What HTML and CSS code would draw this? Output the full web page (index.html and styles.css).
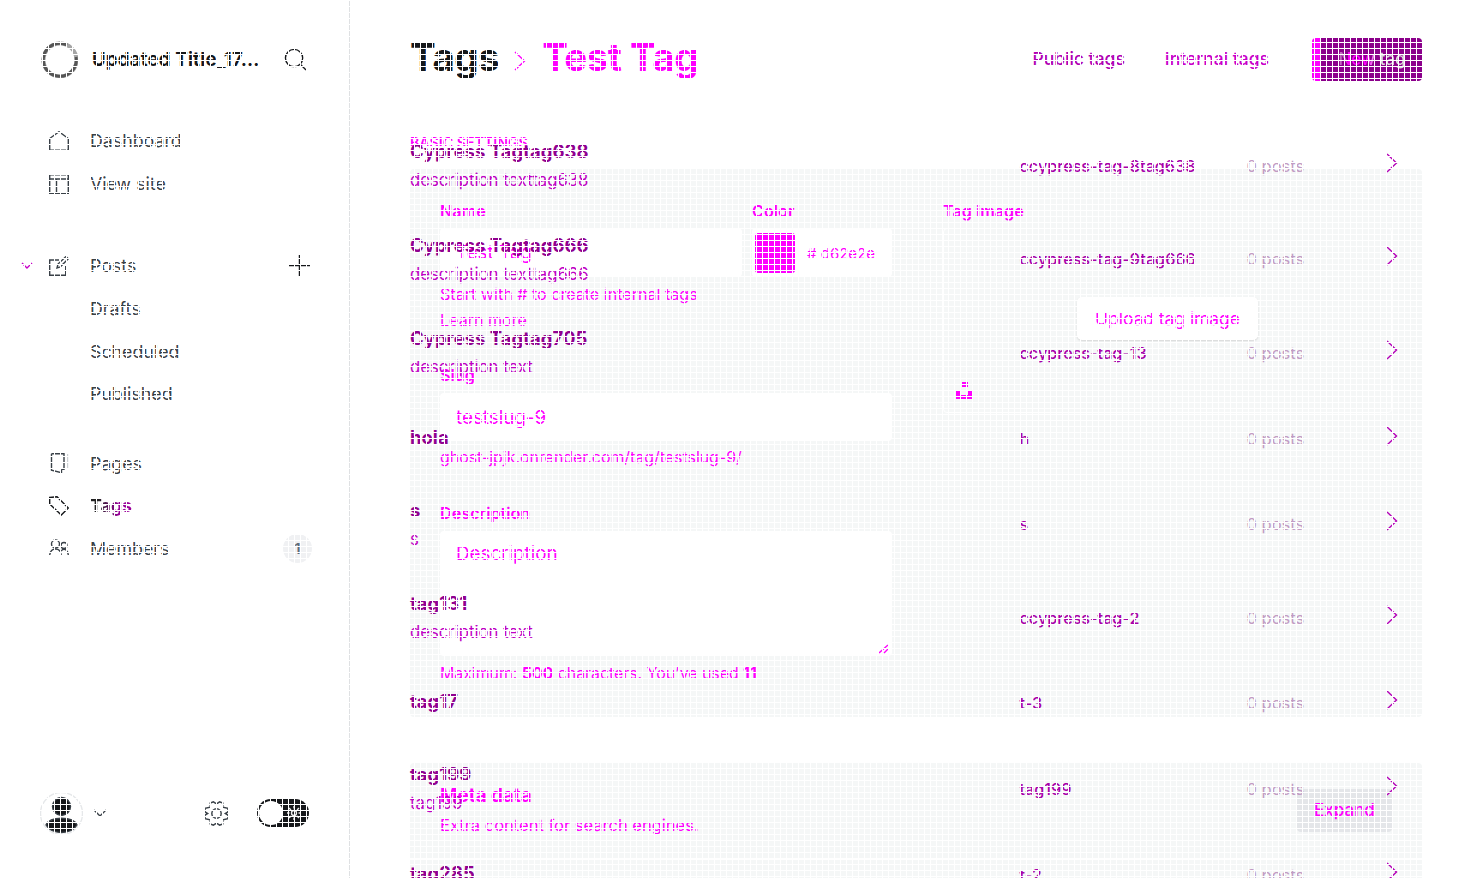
FILE: index.html
```html
<!DOCTYPE html>
<html lang="en">
<head>
<meta charset="utf-8">
<title>Tags</title>
<link rel="stylesheet" href="styles.css">
</head>
<body>
<div class="app">
<aside class="sidebar">
  <header class="site">
    <svg class="site-logo" viewBox="0 0 38 38"><circle cx="19" cy="19" r="16.500" fill="none" stroke="#a5a5a5" stroke-width="4"/><path d="M35 16a16.500 16.500 0 1 1-9-12" fill="none" stroke="#555" stroke-width="3"/></svg>
    <span class="site-title">Updated Title_17…</span>
    <svg class="search" viewBox="0 0 24 24"><circle cx="10.500" cy="10.500" r="9"/><path d="M17 17l6 6"/></svg>
  </header>
  <nav>
    <div class="group">
      <a class="item"><svg class="icon" viewBox="0 0 20 20"><path d="M.7 7.500v11.800h18.600V7.500L10 .7z"/></svg><span>Dashboard</span></a>
      <a class="item"><svg class="icon" viewBox="0 0 20 20"><path d="M.7.700h18.600v18.600H.7zM.7 5h18.600M7.500 5v14.300"/></svg><span>View site</span></a>
    </div>
    <div class="group posts">
      <a class="item"><svg class="caret" viewBox="0 0 12 7"><path d="M1 1l5 5 5-5"/></svg><svg class="icon" viewBox="0 0 20 20"><path d="M10 4H.7v15.300h16V10M8 12l1-4 8-7.500 2.300 2.300-8 8z"/></svg><span>Posts</span><svg class="plus" viewBox="0 0 20 20"><path d="M10 0v20M0 10h20"/></svg></a>
      <a class="item sub"><span>Drafts</span></a>
      <a class="item sub"><span>Scheduled</span></a>
      <a class="item sub"><span>Published</span></a>
    </div>
    <div class="group pages">
      <a class="item"><svg class="icon" viewBox="0 0 20 20"><path d="M2.500.700h12.500v15.600h-2.500M2.500.700v16.500l10 2.500v-3.500"/><path class="faint" d="M18.500 1v15"/></svg><span>Pages</span></a>
      <a class="item"><svg class="icon dark" viewBox="0 0 20 20"><path d="M.7 1.500L8 .7l11.300 11.300-7 7L.7 8z"/></svg><span class="current">Tags</span></a>
      <a class="item"><svg class="icon" viewBox="0 0 20 20"><circle cx="6.500" cy="6" r="4"/><circle cx="15" cy="7.500" r="3"/><path d="M.7 17c.5-4 3-6 6-6s5 2 5.500 6M12 13c4-4 7 0 7.300 4"/></svg><span>Members</span><b class="count">1</b></a>
    </div>
  </nav>
  <footer class="account">
    <svg class="avatar" viewBox="0 0 43 43"><circle cx="21.500" cy="21.500" r="21" fill="#fff" stroke="#e6e8ea"/><circle cx="21.500" cy="14.500" r="9" fill="#15171a"/><path d="M6 33c4-9 27-9 31 0-6 10-25 10-31 0z" fill="#15171a"/></svg>
    <svg class="down" viewBox="0 0 14 8"><path d="M1 1l6 6 6-6"/></svg>
    <svg class="gear" viewBox="0 0 24 24"><circle cx="12" cy="12" r="4.500"/><path d="M12 2.800l3-2 3 1.200v4l5 1v3.500l-2.500 1.500 2.500 1.500V17l-5 1v4l-3 1.200-3-2-3 2L6 22v-4l-5-1v-3.500L3.500 12 1 10.500V7l5-1V2L9 .8z"/></svg>
    <span class="toggle"><i class="knob"></i><svg class="sun" viewBox="0 0 14 14"><circle cx="7" cy="7" r="2.500"/><path d="M7 0v2.500M7 11.500V14M0 7h2.500M11.500 7H14M2 2l2 2M10 10l2 2M12 2l-2 2M2 12l2-2"/></svg></span>
  </footer>
</aside>

<main class="main">
  <header class="top">
    <h1 class="crumbs"><span class="root">Tags</span><svg class="sep" viewBox="0 0 12 20"><path d="M1 1l9.500 9L1 19"/></svg><span class="leaf">Test Tag</span></h1>
    <span class="tab public">Public tags</span>
    <span class="tab internal">Internal tags</span>
    <button class="new"><span>New tag</span></button>
  </header>
  <div class="stack">
    <form class="form">
      <h4 class="eyebrow"><span>Basic settings</span></h4>
      <section class="panel basic">
        <div class="fields">
          <div class="pair">
            <div class="name-field">
              <label>Name</label>
              <div class="input"><span>Test Tag</span></div>
              <p class="hint">Start with # to create internal tags<br>Learn more</p>
            </div>
            <div class="color-field">
              <label>Color</label>
              <div class="input color"><i class="swatch"></i><span># d62e2e</span></div>
            </div>
          </div>
          <div class="slug-field">
            <label>Slug</label>
            <div class="input"><span>testslug-9</span></div>
            <p class="hint tight">ghost-jpjk.onrender.com/tag/testslug-9/</p>
          </div>
          <div class="desc-field">
            <label>Description</label>
            <div class="input area"><span>Description</span><svg class="grip" viewBox="0 0 10 10"><path d="M0 9l9-8M5 9l4-4"/></svg></div>
            <p class="hint tight limit">Maximum: <b>500</b> characters. You’ve used <b>11</b></p>
          </div>
        </div>
        <div class="image-field">
          <label>Tag image</label>
          <div class="drop">
            <button class="upload" type="button"><span>Upload tag image</span></button>
            <svg class="unsplash" viewBox="0 0 16 17"><path d="M6 0h6v5H6zM0 9h4v4h8V9h4v8H0z"/></svg>
          </div>
        </div>
      </section>
      <section class="panel meta">
        <div class="meta-head">
          <div><h4 class="meta-title">Meta data</h4><p class="meta-text">Extra content for search engines.</p></div>
          <button class="expand" type="button"><span>Expand</span></button>
        </div>
      </section>
    </form>
    <div class="list">
      <div class="row"><div class="tag"><h3>Cypress Tagtag638</h3><p>description texttag638</p></div><span class="slug">ccypress-tag-8tag638</span><span class="posts-n">0 posts</span><svg class="go" viewBox="0 0 12 20"><path d="M1 1l9.500 9L1 19"/></svg></div>
      <div class="row"><div class="tag"><h3>Cypress Tagtag666</h3><p>description texttag666</p></div><span class="slug">ccypress-tag-9tag666</span><span class="posts-n">0 posts</span><svg class="go" viewBox="0 0 12 20"><path d="M1 1l9.500 9L1 19"/></svg></div>
      <div class="row"><div class="tag"><h3>Cypress Tagtag705</h3><p>description text</p></div><span class="slug">ccypress-tag-13</span><span class="posts-n">0 posts</span><svg class="go" viewBox="0 0 12 20"><path d="M1 1l9.500 9L1 19"/></svg></div>
      <div class="row short"><div class="tag"><h3>hola</h3></div><span class="slug">h</span><span class="posts-n">0 posts</span><svg class="go" viewBox="0 0 12 20"><path d="M1 1l9.500 9L1 19"/></svg></div>
      <div class="row"><div class="tag"><h3>s</h3><p>s</p></div><span class="slug">s</span><span class="posts-n">0 posts</span><svg class="go" viewBox="0 0 12 20"><path d="M1 1l9.500 9L1 19"/></svg></div>
      <div class="row"><div class="tag"><h3>tag131</h3><p>description text</p></div><span class="slug">ccypress-tag-2</span><span class="posts-n">0 posts</span><svg class="go" viewBox="0 0 12 20"><path d="M1 1l9.500 9L1 19"/></svg></div>
      <div class="row short"><div class="tag"><h3>tag17</h3></div><span class="slug">t-3</span><span class="posts-n">0 posts</span><svg class="go" viewBox="0 0 12 20"><path d="M1 1l9.500 9L1 19"/></svg></div>
      <div class="row"><div class="tag"><h3>tag199</h3><p>tag199</p></div><span class="slug">tag199</span><span class="posts-n">0 posts</span><svg class="go" viewBox="0 0 12 20"><path d="M1 1l9.500 9L1 19"/></svg></div>
      <div class="row short"><div class="tag"><h3>tag285</h3></div><span class="slug">t-2</span><span class="posts-n">0 posts</span><svg class="go" viewBox="0 0 12 20"><path d="M1 1l9.500 9L1 19"/></svg></div>
    </div>
  </div>
</main>
<div class="mesh"></div>
</div>
</body>
</html>
```
FILE: styles.css
```css
* { box-sizing: border-box; }
body { margin: 0; background: #fff; font-family: Inter, "Liberation Sans", sans-serif; color: #394047; overflow: hidden; }
h1, h3, h4, p { margin: 0; }
button { border: 0; font: inherit; padding: 0; }
svg { fill: none; stroke: #394047; stroke-width: 1.4; flex: none; }
.app { position: relative; display: flex; width: 1483px; height: 878px; overflow: hidden; }
.mesh { position: absolute; inset: 0; pointer-events: none; background-image: linear-gradient(90deg, #fff 1px, transparent 1px), linear-gradient(#fff 1px, transparent 1px); background-size: 6px 6px; }

.sidebar { width: 350px; flex: none; border-right: 1px solid #dfe1e3; display: flex; flex-direction: column; }
.site { height: 119.7px; padding: 0 42px 0 41px; display: flex; align-items: center; }
.site-logo { width: 38px; height: 38px; }
.site-title { font-size: 18.6px; font-weight: 700; color: #15171a; margin-left: 13px; padding-bottom: 1px; flex: 1; white-space: nowrap; letter-spacing: .2px; }
.search { width: 23px; height: 23px; stroke: #15171a; }
.group { display: flex; flex-direction: column; margin-bottom: 39.7px; }
.posts { margin-bottom: 27px; }
.item { height: 42.6px; padding: 0 38px 0 49px; display: flex; align-items: center; font-size: 17.8px; }
.item span { margin-left: 21px; flex: 1; }
.sub { padding-left: 69px; }
.icon { width: 20px; height: 20px; }
.faint { stroke: #ccd0d3; }
.dark { stroke: #15171a; }
.caret { width: 12px; height: 7px; margin-left: -28px; margin-right: 16px; stroke: #c800c8; }
.plus { width: 21px; height: 21px; stroke: #15171a; margin-right: 1px; }
.item .current { font-weight: 700; flex: none; color: transparent; background: linear-gradient(90deg, #222 20%, #9a009a 70%); -webkit-background-clip: text; background-clip: text; }
.count { width: 29px; height: 29px; border-radius: 50%; background: #f0f1f3; color: #626d79; display: grid; place-items: center; font-size: 15px; font-weight: 600; margin-right: -1px; }
.account { margin-top: auto; height: 130px; padding: 0 40px; display: flex; align-items: center; }
.avatar { width: 43px; height: 43px; }
.down { width: 14px; height: 8px; margin-left: 10px; }
.gear { width: 25px; height: 25px; margin-left: 97px; }
.toggle { width: 52px; height: 28px; border-radius: 14px; background: #15171a; margin-left: 28px; display: flex; align-items: center; justify-content: space-between; padding: 0 8px 0 2px; }
.knob { width: 24px; height: 24px; border-radius: 50%; background: #fff; }
.sun { width: 14px; height: 14px; stroke: #eee; }

.main { flex: 1; min-width: 0; padding: 0 61px 0 60px; display: flex; flex-direction: column; }
.top { height: 119px; flex: none; display: flex; align-items: center; }
.crumbs { flex: 1; display: flex; align-items: center; font-size: 38.5px; font-weight: 700; line-height: 1; letter-spacing: -.5px; padding-bottom: 4px; }
.root { color: #15171a; }
.leaf { color: #f0f; }
.sep { width: 12px; height: 20px; margin: 7px 16px 0 15px; stroke: #f0f; }
.tab { font-size: 17.5px; font-weight: 500; color: #b000b4; padding-bottom: 3px; }
.public { margin-right: 40px; }
.internal { margin-right: 43px; color: #c800ca; }
.new { width: 110px; height: 43px; border-radius: 4px; background: linear-gradient(90deg, #f0f 8px, #8b008b 8px); font-size: 17px; font-weight: 500; padding-bottom: 1px; }
.new span { margin-left: 10px; color: transparent; background: linear-gradient(90deg, #c06ac0 8%, #f0f 14%, #f0f 40%, #ddd 60%); -webkit-background-clip: text; background-clip: text; }

.stack { display: grid; flex: 1; min-height: 0; }
.form, .list { grid-area: 1 / 1; min-width: 0; }
.list { position: relative; }
.row { height: 93.6px; display: flex; align-items: center; }
.short { height: 77.6px; }
.tag { width: 609.5px; flex: none; }
.tag h3 { font-size: 18.5px; font-weight: 700; line-height: 30px; color: #900090; }
.short h3 { padding-bottom: 4px; }
.tag p { font-size: 16.7px; line-height: 28px; color: #c000c4; }
.tag:has(p) { padding-bottom: 1px; }
.slug { width: 227px; font-size: 16.2px; font-weight: 500; color: #a800aa; }
.posts-n { width: 140px; font-size: 16.5px; color: #c29cc4; }
.go { width: 12px; height: 20px; margin: -6px 1px 0 -1px; stroke: #b400b8; }

.form { color: #f0f; }
.eyebrow { height: 50px; padding-top: 15px; font-size: 14.2px; line-height: 17px; font-weight: 600; text-transform: uppercase; }
.eyebrow span { display: block; height: 12px; overflow: hidden; }
.panel { background: #f5f7f7; border-radius: 4px; }
.basic { height: 548px; padding: 30px 30px 0; display: flex; gap: 51px; margin-bottom: 46px; }
.fields { width: 452px; }
.pair { display: flex; gap: 10px; height: 164px; }
.name-field { width: 302px; }
.color-field { width: 140px; }
label { display: block; font-size: 16.2px; font-weight: 600; line-height: 24px; height: 29px; }
.input { height: 48.5px; background: #fff; border-radius: 4px; padding: 1px 0 0 16px; display: flex; align-items: center; font-size: 18.8px; }
.color { padding-left: 3px; font-size: 15px; }
.color span { padding-top: 2px; }
.swatch { width: 40px; height: 40px; border-radius: 3px; background: #f0f; margin-right: 12px; }
.hint { font-size: 16.1px; line-height: 26px; padding-top: 4px; white-space: nowrap; }
.tight { font-size: 15.9px; padding-top: 4px; }
.limit { font-size: 15.85px; padding-top: 5px; }
.slug-field { height: 138px; }
.slug-field .input { margin-top: 1px; height: 48px; }
.desc-field .input { margin-top: 1px; }
.area { height: 125px; align-items: flex-start; justify-content: space-between; padding-top: 11px; }
.grip { width: 10px; height: 10px; align-self: flex-end; margin: 0 3px 2px 0; stroke: #f0f; }
.image-field { flex: 1; }
.drop { height: 185px; border: 1px solid #fff; border-radius: 4px; display: grid; grid-template-rows: 1fr; place-items: center; }
.upload { grid-area: 1 / 1; width: 181px; height: 43px; background: #fff; border-radius: 5px; box-shadow: 0 1px 2px #0002; color: #f0f; font-size: 17.4px; white-space: nowrap; margin-top: -5px; }
.unsplash { grid-area: 1 / 1; place-self: end start; width: 16px; height: 17px; margin: 0 0 13px 12px; fill: #f0f; stroke: none; }
.meta { height: 180px; }
.meta-head { height: 97px; border-bottom: 1px solid #fff; padding: 0 30px 2px; display: flex; align-items: center; justify-content: space-between; }
.meta-title { font-size: 18.8px; font-weight: 700; line-height: 29px; }
.meta-text { font-size: 16.5px; line-height: 30px; }
.expand { width: 95px; height: 43px; border-radius: 4px; background: #e4e6e9; color: #f0f; font-size: 17px; font-weight: 500; }
```
